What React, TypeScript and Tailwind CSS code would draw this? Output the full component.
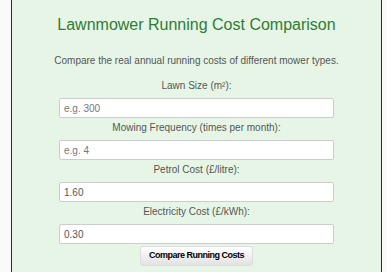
import React from "react";

const fields = [
  { label: "Lawn Size (m²):", placeholder: "e.g. 300", value: "" },
  { label: "Mowing Frequency (times per month):", placeholder: "e.g. 4", value: "" },
  { label: "Petrol Cost (£/litre):", placeholder: "", value: "1.60" },
  { label: "Electricity Cost (£/kWh):", placeholder: "", value: "0.30" },
];

export default function App() {
  return (
    <div className="w-[387px] h-[272px] overflow-hidden bg-[#fafafa]" style={{ fontFamily: '"Liberation Sans", Arial, sans-serif' }}>
      <div className="ml-[11px] w-[371px] h-[272px] border-x border-[#2a2a2a] bg-[#e6f5e6] pt-[15px] flex flex-col items-center">
        <h1 className="text-[16px] leading-[20px] text-[#2e7d32] font-normal">Lawnmower Running Cost Comparison</h1>
        <p className="mt-[19px] text-[10px] leading-[14px] text-[#555]">Compare the real annual running costs of different mower types.</p>
        <div className="mt-[11px] flex flex-col items-center">
          {fields.map((f) => (
            <div key={f.label} className="flex flex-col items-center mb-[3px]">
              <label className="text-[10px] leading-[14px] text-[#555] mb-[5px]">{f.label}</label>
              <input
                className="w-[275px] h-[20px] border border-[#ccc] rounded-[2px] bg-white px-[4px] text-[10px] text-[#555] placeholder:text-[#777] outline-none"
                placeholder={f.placeholder}
                defaultValue={f.value}
              />
            </div>
          ))}
          <button className="mt-[-1px] w-[113px] h-[20px] rounded-[3px] border border-[#ddd] bg-gradient-to-b from-white to-[#e2e2e2] text-[9px] tracking-[-0.5px] font-bold text-black whitespace-nowrap">
            Compare Running Costs
          </button>
        </div>
      </div>
    </div>
  );
}
